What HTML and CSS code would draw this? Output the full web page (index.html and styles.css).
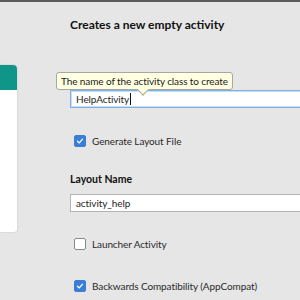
FILE: index.html
```html
<!DOCTYPE html>
<html>
<head>
<meta charset="utf-8">
<link rel="stylesheet" href="styles.css">
</head>
<body>
<div class="topbar"></div>
<div class="layout">
  <aside class="side">
    <div class="card">
      <div class="card-head"></div>
      <div class="card-body"></div>
    </div>
  </aside>
  <main class="main">
    <h1 class="title">Creates a new empty activity</h1>
    <div class="field-wrap">
      <div class="tooltip">The name of the activity class to create</div>
      <div class="input focused"><span>HelpActivity</span><span class="caret"></span></div>
    </div>
    <label class="check row-gen"><span class="box on"><svg viewBox="0 0 12 12" width="12" height="12"><path d="M3 6.3 L5.1 8.3 L9 3.8" fill="none" stroke="#fff" stroke-width="1.6" stroke-linecap="round" stroke-linejoin="round"/></svg></span>Generate Layout File</label>
    <div class="label">Layout Name</div>
    <div class="input"><span>activity_help</span></div>
    <label class="check row-launch"><span class="box"></span>Launcher Activity</label>
    <label class="check row-compat"><span class="box on"><svg viewBox="0 0 12 12" width="12" height="12"><path d="M3 6.3 L5.1 8.3 L9 3.8" fill="none" stroke="#fff" stroke-width="1.6" stroke-linecap="round" stroke-linejoin="round"/></svg></span>Backwards Compatibility (AppCompat)</label>
  </main>
</div>
</body>
</html>
```

FILE: styles.css
```css
html, body {
  margin: 0;
  padding: 0;
  width: 300px;
  height: 300px;
  overflow: hidden;
  background: #e6e6e6;
  font-family: Lato, "Open Sans", sans-serif;
  color: #1e1e1e;
}
.topbar {
  height: 2px;
  background: #5c5c5c;
}
.layout {
  display: flex;
}
.side {
  width: 17px;
  padding-top: 63px;
  flex: none;
}
.card {
  border-radius: 0 4px 4px 0;
  overflow: hidden;
  box-shadow: 0 0 2px rgba(0,0,0,0.18);
  background: #fff;
}
.card-head {
  height: 25px;
  background: #0f9688;
}
.card-body {
  height: 142px;
  background: #fff;
}
.main {
  margin-left: 53px;
  flex: none;
  width: 260px;
  display: flex;
  flex-direction: column;
}
.title {
  margin: 15px 0 0;
  font-size: 12px;
  font-weight: 700;
  line-height: 16px;
  color: #111;
}
.field-wrap {
  position: relative;
  margin-top: 57px;
}
.tooltip {
  position: absolute;
  left: -14px;
  top: -18px;
  height: 16px;
  padding: 0 4px;
  line-height: 16px;
  font-size: 10px;
  letter-spacing: -0.1px;
  background: #ffffe1;
  border: 1px solid #a8a8a0;
  border-radius: 3px;
  white-space: nowrap;
  color: #222;
  z-index: 2;
}
.tooltip::after {
  content: "";
  position: absolute;
  left: 82px;
  bottom: -5px;
  width: 7px;
  height: 7px;
  background: #ffffe1;
  border-right: 1px solid #a8a8a0;
  border-bottom: 1px solid #a8a8a0;
  transform: rotate(45deg);
}
.input {
  height: 16px;
  width: 250px;
  border: 1px solid #b4b4b4;
  background: #fff;
  font-size: 10px;
  letter-spacing: -0.1px;
  line-height: 16px;
  padding-left: 5px;
  display: flex;
  align-items: center;
  color: #1e1e1e;
}
.input.focused {
  border-color: #7db0e6;
  box-shadow: inset 0 0 0 1px #c9def5;
}
.caret {
  width: 1px;
  height: 12px;
  background: #111;
  margin-left: 1px;
}
.check {
  display: flex;
  align-items: center;
  font-size: 10px;
  letter-spacing: -0.1px;
  line-height: 14px;
  color: #2a2a2a;
  padding-left: 4px;
}
.box {
  width: 10px;
  height: 10px;
  border: 1px solid #8a8a8a;
  border-radius: 2px;
  background: #fff;
  margin-right: 6px;
  display: flex;
  align-items: center;
  justify-content: center;
  flex: none;
}
.box.on {
  background: #3b7ed6;
  border-color: #3b7ed6;
}
.box svg {
  display: block;
}
.row-gen {
  margin-top: 26px;
}
.label {
  margin-top: 24px;
  font-size: 10.5px;
  font-weight: 700;
  line-height: 14px;
  color: #111;
}
.label + .input {
  margin-top: 8px;
}
.row-launch {
  margin-top: 25px;
}
.row-compat {
  margin-top: 28px;
}
```
